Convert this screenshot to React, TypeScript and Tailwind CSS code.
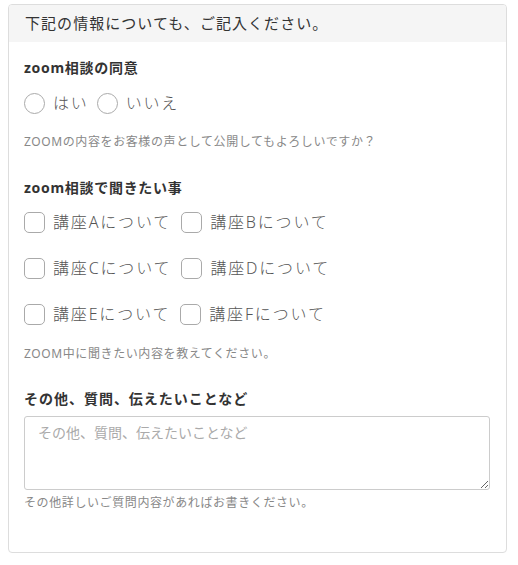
import React from 'react';

const font = { fontFamily: '"Noto Sans", "Noto Sans CJK JP", sans-serif' };

const Check: React.FC<{ label: string }> = ({ label }) => (
    <label className="flex items-center h-6 mr-[10px]">
        <input type="checkbox" className="appearance-none w-[21px] h-[21px] border border-[#aaa] rounded-[5px] bg-white m-0" />
        <span className="ml-[8px] text-[16px] leading-6 font-light tracking-[0.115em] text-[#555]">{label}</span>
    </label>
);

const Radio: React.FC<{ label: string }> = ({ label }) => (
    <label className="flex items-center h-6 mr-[8px]">
        <input type="radio" name="agree" className="appearance-none w-[21px] h-[21px] border border-[#aaa] rounded-full bg-white m-0" />
        <span className="ml-[8px] text-[16px] leading-6 font-light tracking-[0.115em] text-[#555]">{label}</span>
    </label>
);

export default function App() {
    return (
        <div className="pt-1 pl-2 bg-white min-h-[565px]" style={font}>
            <div className="w-[499px] border border-[#ddd] rounded-[4px] bg-white overflow-hidden">
                <div className="h-[37px] bg-[#f5f5f5] flex items-center px-4 text-[15px] tracking-[0.07em] text-[#333]">
                    下記の情報についても、ご記入ください。
                </div>

                <div className="pl-[15px] pr-4 pt-4 pb-10">
                    {/* 同意 */}
                    <div className="text-[14px] leading-5 font-bold text-[#333] tracking-[0.05em]">zoom相談の同意</div>
                    <div className="flex mt-[13px]">
                        <Radio label="はい" />
                        <Radio label="いいえ" />
                    </div>
                    <p className="mt-[18px] text-[12px] leading-[18px] tracking-[0.05em] text-[#888]">
                        ZOOMの内容をお客様の声として公開してもよろしいですか？
                    </p>

                    {/* 聞きたい事 */}
                    <div className="mt-[27px] text-[14px] leading-5 font-bold text-[#333] tracking-[0.05em]">zoom相談で聞きたい事</div>
                    <div className="mt-3 flex flex-col gap-[22px]">
                        <div className="flex">
                            <Check label="講座Aについて" />
                            <Check label="講座Bについて" />
                        </div>
                        <div className="flex">
                            <Check label="講座Cについて" />
                            <Check label="講座Dについて" />
                        </div>
                        <div className="flex">
                            <Check label="講座Eについて" />
                            <Check label="講座Fについて" />
                        </div>
                    </div>
                    <p className="mt-[19px] text-[12px] leading-[18px] tracking-[0.05em] text-[#888]">
                        ZOOM中に聞きたい内容を教えてください。
                    </p>

                    {/* その他 */}
                    <div className="mt-[26px] text-[14px] leading-5 font-bold text-[#333] tracking-[0.07em]">その他、質問、伝えたいことなど</div>
                    <textarea
                        placeholder="その他、質問、伝えたいことなど"
                        className="mt-[7px] block w-full h-[74px] border border-[#ccc] rounded-[3px] px-[13px] py-[6px] text-[14px] leading-5 tracking-normal text-[#333] placeholder:text-[#aaa] outline-none"
                    />
                    <p className="mt-1 text-[12px] leading-[18px] tracking-[0.05em] text-[#888]">
                        その他詳しいご質問内容があればお書きください。
                    </p>
                </div>
            </div>
        </div>
    );
}
